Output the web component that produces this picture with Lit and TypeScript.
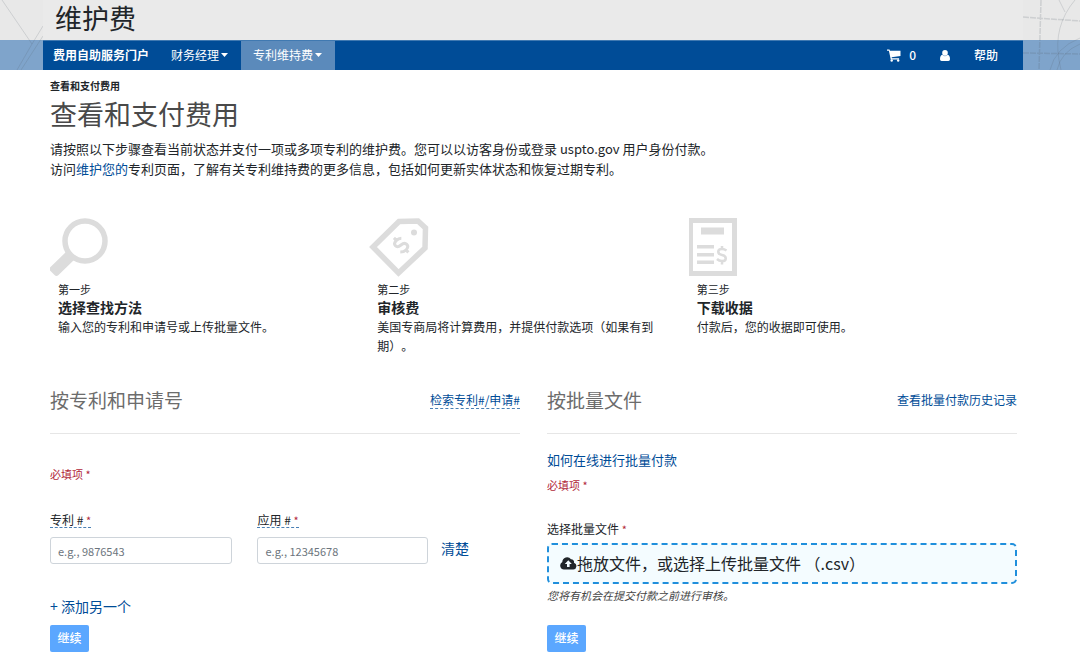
import { LitElement, html, css, svg } from "lit";
import { customElement } from "lit/decorators.js";

const magnifier = svg`<svg class="pic" width="60" height="60" viewBox="0 0 60 60" aria-hidden="true">
  <circle cx="35" cy="23" r="20" fill="none" stroke="#dcdcdc" stroke-width="5.5"/>
  <path d="M16 34l8 8-15.500 15q-2 2-4 0l-4-4q-2-2 0-4z" fill="#dcdcdc"/>
</svg>`;

const tag = svg`<svg class="pic" width="60" height="60" viewBox="0 0 60 60" aria-hidden="true">
  <path d="M4 29L30 3.500L49 3L56.500 10L56 30L29.500 55Z" fill="none" stroke="#dcdcdc" stroke-width="5.500"/>
  <circle cx="45" cy="14.500" r="3" fill="#dcdcdc"/>
  <g transform="rotate(-45 32 27)" fill="none" stroke="#dcdcdc" stroke-width="3">
    <path d="M37 22.500q-2-2-5-2c-6 0-6 6 0 6.500s6 7 0 7q-3 0-5.500-2.500M32 17v4M32 33.500v4"/>
  </g>
</svg>`;

const receipt = svg`<svg class="pic" width="60" height="60" viewBox="1 1 60 60" aria-hidden="true">
  <path d="M2.500 3.500h44v53h-44z" fill="none" stroke="#dcdcdc" stroke-width="5"/>
  <path d="M13 10.500h23v7H13zM9 28h17v3.500H9zM9 36h17v3.500H9zM9 43.500h17v3.500H9z" fill="#dcdcdc"/>
  <path d="M38.500 33.500q-2-1.500-4.500-1.500c-5 0-5 5 0 6s5 6 0 6q-3 0-5-2M34 29v3.500M34 43.500v4" fill="none" stroke="#dcdcdc" stroke-width="2.500"/>
</svg>`;

const cart = svg`<svg width="14" height="13" viewBox="0 0 15 14" aria-hidden="true" fill="#fff">
  <path d="M0 .5h2.600l.6 1.500H14.500v5.500L5 8.800l.2 1.100H13v1.300H4L2 2H0z"/>
  <circle cx="5" cy="12.300" r="1.300"/><circle cx="12" cy="12.300" r="1.300"/>
</svg>`;

const person = svg`<svg width="10" height="11" viewBox="0 0 10 11" aria-hidden="true" fill="#fff">
  <circle cx="5" cy="2.900" r="2.800"/>
  <path d="M2.300 4.800Q5 7.500 7.700 4.800Q10 5.500 10 9.200Q10 11 8.400 11H1.600Q0 11 0 9.200Q0 5.500 2.300 4.800z"/>
</svg>`;

const cloud = svg`<svg width="17" height="14" viewBox="0 0 17 14" aria-hidden="true">
  <path d="M4 13.500A4 4 0 0 1 2.300 6A4.800 4.800 0 0 1 11 3.300A2.800 2.800 0 0 1 14 6.700A3.500 3.500 0 0 1 13.300 13.500z" fill="#212529"/>
  <path d="M8.300 4.300l3.500 3.700H9.600v3H7V8H4.800z" fill="#f4fcff"/>
</svg>`;

const caret = svg`<svg width="7" height="4" viewBox="0 0 7 4" aria-hidden="true"><path d="M0 0h7L3.500 4z" fill="#fff"/></svg>`;

const steps = [
  { icon: magnifier, no: "第一步", title: "选择查找方法", text: "输入您的专利和申请号或上传批量文件。" },
  { icon: tag, no: "第二步", title: "审核费", text: "美国专商局将计算费用，并提供付款选项（如果有到期）。" },
  { icon: receipt, no: "第三步", title: "下载收据", text: "付款后，您的收据即可使用。" },
];

@customElement("app-root")
export class AppRoot extends LitElement {
  static styles = css`
    :host { display: block; background: #fff; color: #212529; font: 14px/20px "Noto Sans CJK SC", sans-serif; text-spacing-trim: space-all; }
    * { box-sizing: border-box; }
    h1, h2, h3, p { margin: 0; font-weight: 400; }
    a { color: #004c97; text-decoration: none; }
    button, input { font-family: inherit; }
    .banner { position: relative; background: linear-gradient(#e8e8e8 0 40px, #7fa4cb 40px 70px); }
    .lines { position: absolute; top: 0; width: 57px; height: 70px; }
    .left { left: 0; width: 43px; }
    .right { right: 0; }
    .inner { position: relative; margin: 0 57px 0 43px; }
    .site { height: 40px; padding-left: 12px; background: #eaeaea; font-size: 27px; line-height: 35px; }
    .nav { display: flex; height: 30px; background: #004c97; border-top: 1px solid #4079b1; font-size: 12px; }
    .nav a { display: flex; align-items: center; gap: 2px; padding: 0 13px 1px 12px; color: #fff; }
    .nav .brand { padding: 0 10px 1px; font-weight: 700; }
    .nav .active { background: #5b8abb; }
    .nav .tools { display: flex; margin-left: auto; padding-right: 13px; }
    .nav .tools a { padding: 0 12px 1px; gap: 8px; font-weight: 500; }
    main { padding: 8px 63px 19px 50px; }
    .crumb { font-size: 10px; line-height: 16px; font-weight: 700; }
    h1 { font-size: 27px; line-height: 40px; color: #494949; }
    .intro { padding-top: 5px; font-size: 13px; }
    .steps { display: grid; grid-template-columns: repeat(3, 1fr); margin-right: 9px; padding-top: 39px; }
    .step { padding-right: 26px; }
    .pic { display: block; margin-bottom: 3px; }
    .words { padding-left: 8px; }
    .no { font-size: 11px; line-height: 16px; }
    .words h3 { font-size: 14px; line-height: 20px; font-weight: 700; }
    .desc { font-size: 12px; line-height: 19px; }
    .methods { display: grid; grid-template-columns: 1fr 1fr; gap: 27px; padding-top: 29px; }
    .head { display: flex; justify-content: space-between; align-items: center; height: 50px; padding-bottom: 17px; margin-bottom: 16px; border-bottom: 1px solid #e6e6e6; font-size: 12px; }
    h2 { font-size: 19px; line-height: 28px; color: #6c6c6c; }
    .hint { border-bottom: 1px dashed #4a80b5; line-height: 16px; }
    .method { display: flex; flex-direction: column; align-items: stretch; }
    .req { font-size: 11px; line-height: 18px; color: #b1283a; }
    .star { color: #b1283a; font-size: 11px; }
    .first .req { padding-top: 15px; }
    .fields { display: flex; align-items: flex-end; padding-top: 30px; }
    .field { display: flex; flex-direction: column; align-items: flex-start; gap: 9px; flex: 183 1 0; margin-right: 25px; }
    .field.app { flex-grow: 171; margin-right: 13px; }
    label { font-size: 12px; line-height: 16px; }
    .field label { border-bottom: 1px dashed #4a80b5; line-height: 14px; }
    input { width: 100%; height: 27px; padding: 0 7px; border: 1px solid #ced4da; border-radius: 3px; background: #fff; font-size: 11px; color: #212529; }
    input::placeholder { color: #6c757d; opacity: 1; }
    .link { border: 0; padding: 0; background: none; color: #004c97; font-size: 14px; line-height: 20px; cursor: pointer; text-align: left; }
    .clear { width: 79px; padding-bottom: 6px; }
    .add { margin-top: auto; padding-bottom: 9px; }
    .go { align-self: flex-start; width: 39px; height: 27px; border: 0; border-radius: 2px; padding: 0 0 2px; background: #5ba7ff; color: #fff; font-size: 12px; font-weight: 500; }
    .how { font-size: 13px; line-height: 20px; padding-bottom: 6px; }
    .file { padding-top: 27px; padding-bottom: 6px; }
    .drop { display: flex; align-items: center; height: 41px; padding: 0 11px 2px; border: 2px dashed #208fdc; border-radius: 5px; background: #f4fcff; color: #212529; font-size: 16px; text-align: left; }
    .note { padding: 2px 0 21px; font-size: 11px; line-height: 18px; font-style: italic; color: #444; }
  `;

  render() {
    return html`
      <header class="banner">
        <svg class="lines left" viewBox="0 0 43 70" fill="none" stroke="#55606c" stroke-opacity=".18" aria-hidden="true">
          <path d="M2 0L32 44L17 70M43 26L32 44M43 36L21 70"/>
        </svg>
        <svg class="lines right" viewBox="0 0 57 70" fill="none" stroke="#55606c" stroke-opacity=".18" aria-hidden="true">
          <path d="M0 17L57 21M18 0L16 70M0 53L57 54" stroke-width="1.500" stroke-dasharray="6 1"/>
          <path d="M36 0L42 12M52 0Q30 26 36 60L38 70M57 38Q32 48 27 70M57 44Q38 52 34 70"/>
        </svg>
        <div class="inner">
          <div class="site">维护费</div>
          <nav class="nav">
            <a class="brand" href="#">费用自助服务门户</a>
            <a href="#">财务经理${caret}</a>
            <a class="active" href="#">专利维持费${caret}</a>
            <div class="tools">
              <a href="#">${cart}<span>0</span></a>
              <a href="#" aria-label="用户">${person}</a>
              <a href="#">帮助</a>
            </div>
          </nav>
        </div>
      </header>
      <main>
        <div class="crumb">查看和支付费用</div>
        <h1>查看和支付费用</h1>
        <p class="intro">请按照以下步骤查看当前状态并支付一项或多项专利的维护费。您可以以访客身份或登录 uspto.gov 用户身份付款。<br>访问<a href="#">维护您的</a>专利页面，了解有关专利维持费的更多信息，包括如何更新实体状态和恢复过期专利。</p>
        <section class="steps">
          ${steps.map((s) => html`<div class="step">${s.icon}
            <div class="words"><div class="no">${s.no}</div><h3>${s.title}</h3><p class="desc">${s.text}</p></div>
          </div>`)}
        </section>
        <div class="methods">
          <section class="method first">
            <div class="head"><h2>按专利和申请号</h2><a class="hint" href="#">检索专利#/申请#</a></div>
            <p class="req">必填项 *</p>
            <div class="fields">
              <div class="field"><label for="patent">专利 # <span class="star">*</span></label><input id="patent" placeholder="e.g., 9876543"></div>
              <div class="field app"><label for="application">应用 # <span class="star">*</span></label><input id="application" placeholder="e.g., 12345678"></div>
              <button class="link clear" type="button">清楚</button>
            </div>
            <button class="link add" type="button">+ 添加另一个</button>
            <button class="go" type="button">继续</button>
          </section>
          <section class="method">
            <div class="head"><h2>按批量文件</h2><a href="#">查看批量付款历史记录</a></div>
            <a class="how" href="#">如何在线进行批量付款</a>
            <p class="req">必填项 *</p>
            <label class="file" for="batch">选择批量文件 <span class="star">*</span></label>
            <button class="drop" id="batch" type="button">${cloud}<span>拖放文件，或选择上传批量文件 （.csv）</span></button>
            <p class="note">您将有机会在提交付款之前进行审核。</p>
            <button class="go" type="button">继续</button>
          </section>
        </div>
      </main>
    `;
  }
}
